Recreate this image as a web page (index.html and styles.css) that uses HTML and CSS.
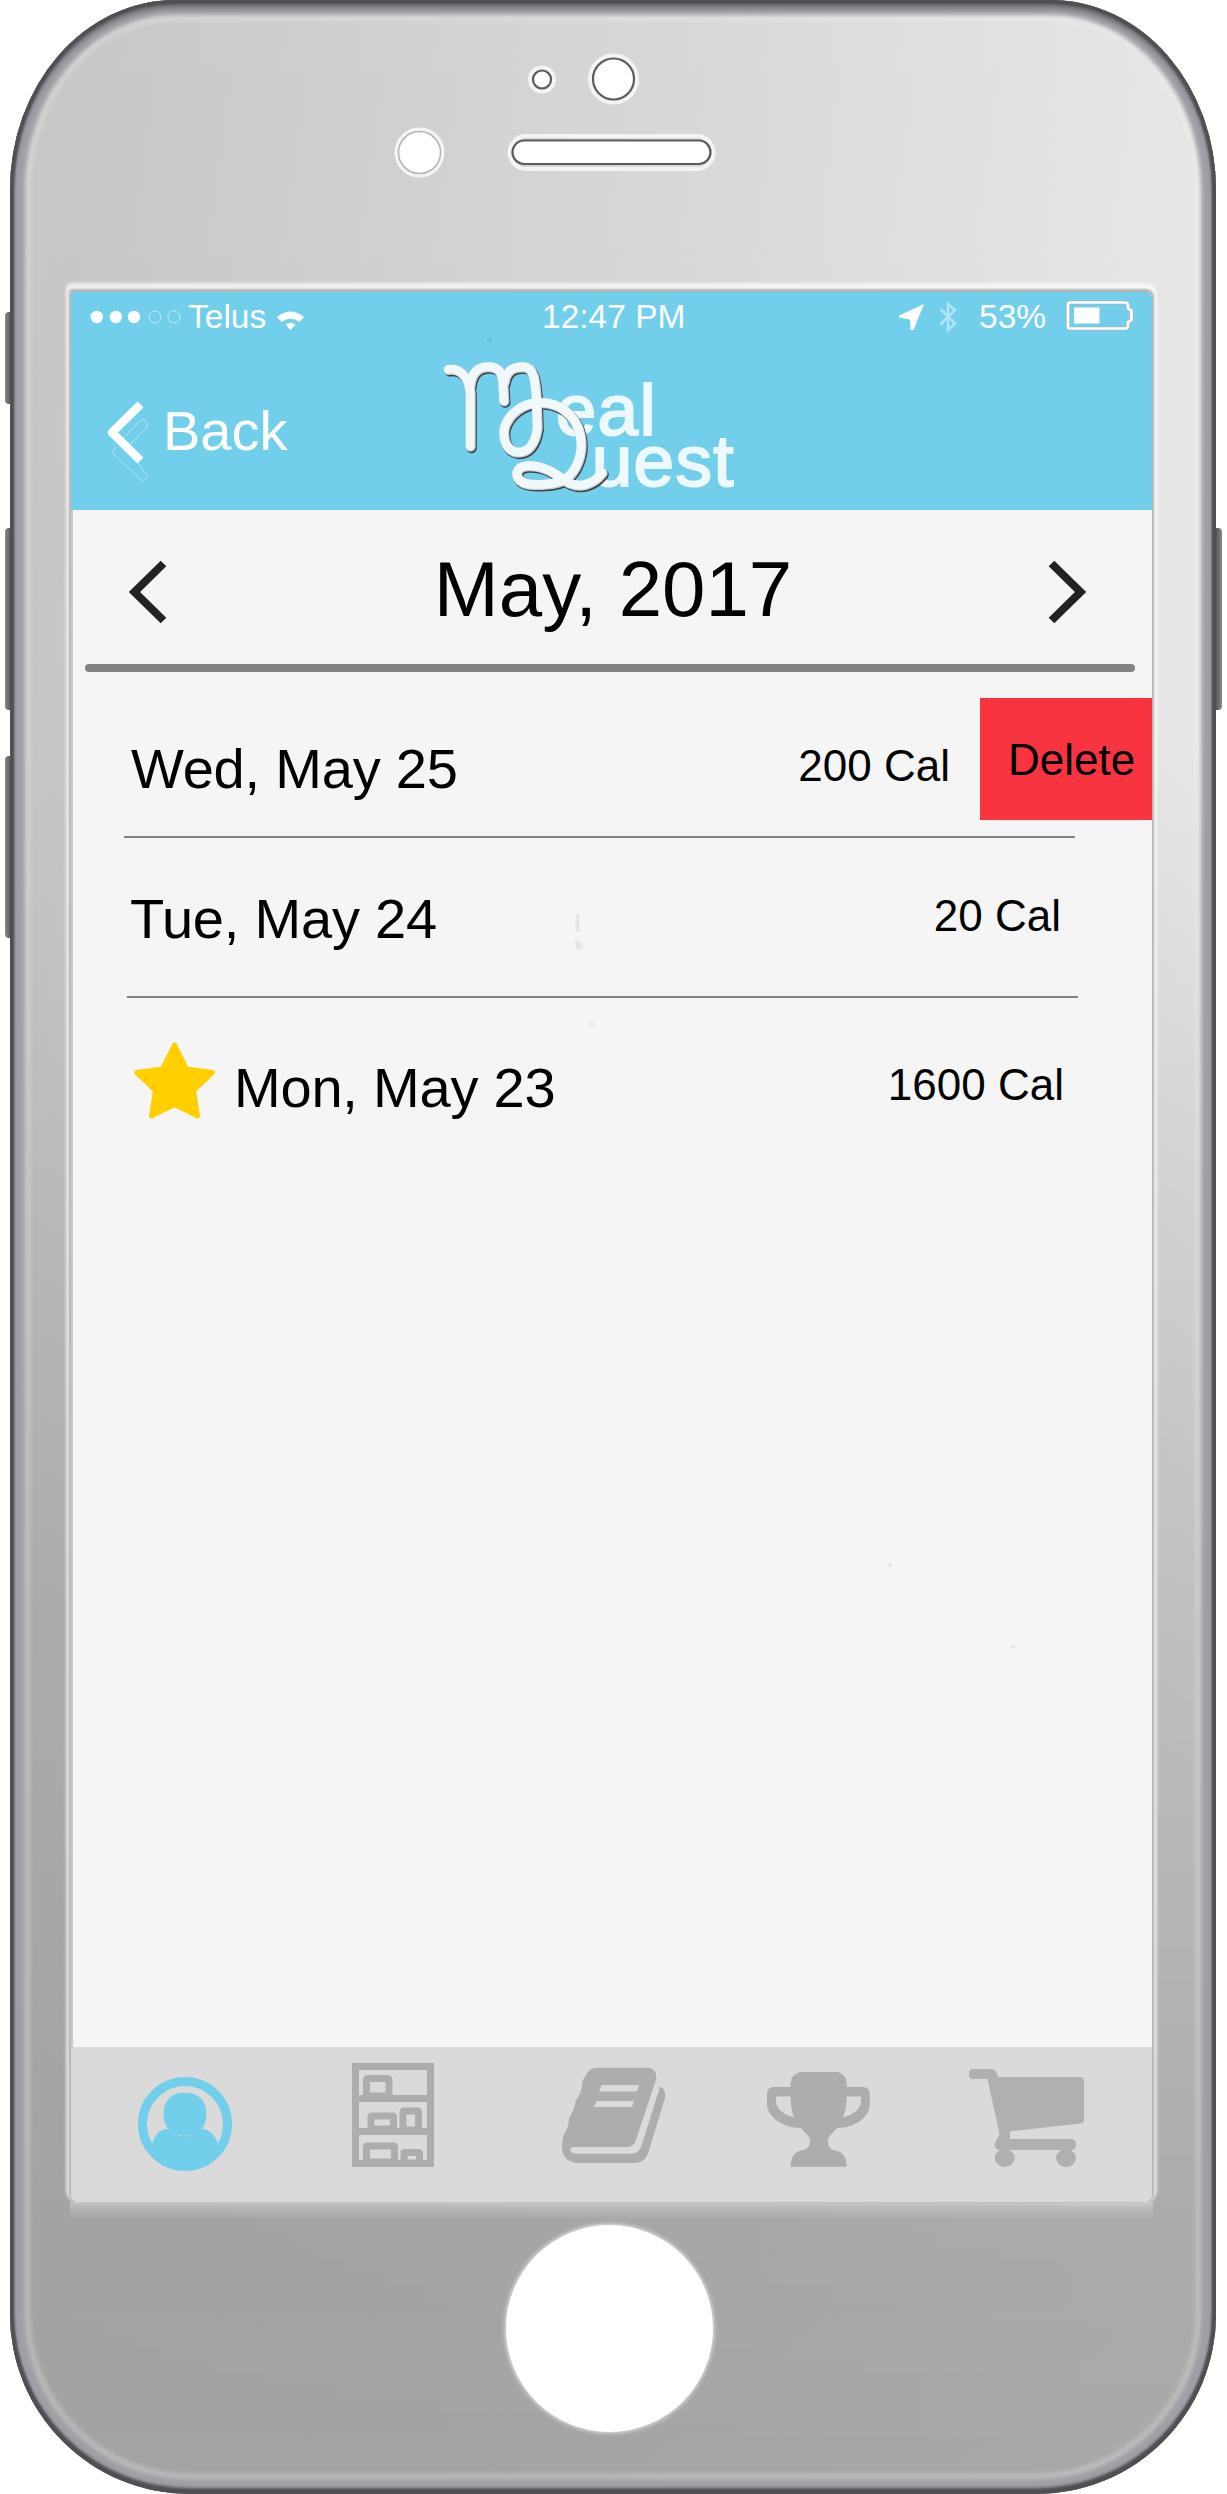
FILE: index.html
```html
<!DOCTYPE html>
<html lang="en">
<head>
<meta charset="utf-8">
<title>Meal Quest</title>
<link rel="stylesheet" href="styles.css">
</head>
<body>
<div class="device">
  <i class="side-button mute"></i>
  <i class="side-button volume-up"></i>
  <i class="side-button volume-down"></i>
  <i class="side-button power"></i>
  <div class="phone">
    <div class="bezel-top">
      <svg width="1206" height="292" viewBox="10 0 1206 292">
        <g fill="none" stroke="#f4f4f4" stroke-width="4">
          <circle cx="542" cy="79.500" r="12"/>
          <circle cx="613.500" cy="79" r="23.500"/>
          <circle cx="419.500" cy="152.500" r="23"/>
          <rect x="509.500" y="136" width="204" height="33" rx="16.500"/>
        </g>
        <g fill="#fff" stroke="#5c5c5c" stroke-width="2.200">
          <circle cx="542" cy="79.500" r="9"/>
          <circle cx="613.500" cy="79" r="20.500"/>
          <rect x="512.500" y="140.500" width="198" height="23.500" rx="11.700"/>
          <circle cx="419.500" cy="152.500" r="21" stroke="#b3b1bc" stroke-width="1.500"/>
        </g>
      </svg>
    </div>

    <main class="screen">
      <header class="header">
        <div class="status">
          <svg class="signal" width="110" height="49" viewBox="71 292 110 49">
            <g fill="#fff"><circle cx="96.800" cy="317" r="6.200"/><circle cx="115.900" cy="317" r="6.200"/><circle cx="134" cy="317" r="6.200"/></g>
            <g fill="none" stroke="#fff" stroke-opacity=".55" stroke-width="1"><circle cx="155" cy="317" r="6"/><circle cx="174" cy="317" r="6"/></g>
          </svg>
          <span class="carrier">Telus</span>
          <svg class="wifi" width="28" height="49" viewBox="276 292 28 49">
            <g fill="#fff"><path d="M277 317Q290.500 306 304 317L299.500 322Q290.500 315.500 281.500 322Z"/><path d="M285.500 324.500Q290.500 321 295.500 324.500L290.500 330Z"/></g>
          </svg>
          <span class="clock">12:47 PM</span>
          <svg class="radios" width="60" height="49" viewBox="899 292 60 49">
            <path fill="#fff" d="M925 304L914.500 330H911.500L911 319.500L900 317.500V315.500Z"/>
            <path fill="none" stroke="#fff" stroke-opacity=".45" stroke-width="2.600" d="M941.500 309L956 323.500L949 330V304L956 310L941.500 324.500"/>
          </svg>
          <span class="charge">53%</span>
          <svg class="battery" width="70" height="49" viewBox="1066 292 70 49">
            <path fill="none" stroke="#a9b4b8" stroke-width="4" d="M1071 302.500H1126Q1129 302.500 1129 305.500V308.500L1132.500 310.500V320L1129 322V325.500Q1129 328.500 1126 328.500H1071Q1069 328.500 1069 326.500V304.500Q1069 302.500 1071 302.500Z"/>
            <path fill="none" stroke="#fff" stroke-width="2.600" d="M1071 302.500H1126Q1129 302.500 1129 305.500V308.500L1132.500 310.500V320L1129 322V325.500Q1129 328.500 1126 328.500H1071Q1069 328.500 1069 326.500V304.500Q1069 302.500 1071 302.500Z"/>
            <path fill="#fff" d="M1075 307.500H1100.500V323.500H1075Z"/>
          </svg>
        </div>
        <nav class="navbar">
          <a class="back">
            <svg width="55" height="90" viewBox="100 395 55 90">
              <path fill="none" stroke="#fff" stroke-opacity=".45" stroke-width="1" d="M123 438L140 421Q145 418 147.500 423.500L147 427L125 450M116 447Q111 451 114 454.500L140 479Q145 483 147.500 476L137 462"/>
              <path fill="none" stroke="#fff" stroke-width="8.500" stroke-linejoin="round" d="M140.500 404.500L112 432.500L140.500 460.500"/>
            </svg>
            <span>Back</span>
          </a>
          <svg class="logo" width="340" height="150" viewBox="0 0 1020 450">
            <defs>
              <filter id="soft" x="-10%" y="-10%" width="120%" height="120%"><feGaussianBlur stdDeviation="2"/></filter>
              <g id="monogram">
                <path d="M86 60C118 54 147 78 152 130V290"/>
                <path d="M151 112C155 72 172 52 206 52C238 52 249 72 250 104L253 154"/>
                <path d="M254 98C260 62 280 52 312 52C343 54 346 92 350 140L353 236C346 288 322 308 295 308C262 306 248 272 254 236C266 192 310 159 362 159C436 160 485 216 485 288C483 340 458 378 428 394C396 406 332 410 308 398C282 384 286 350 326 349C376 348 410 374 440 396C480 420 524 402 548 370"/>
              </g>
            </defs>
            <g class="wordmark">
              <text x="407" y="255">eal</text>
              <text x="515" y="408">uest</text>
            </g>
            <g fill="none" stroke-linecap="round" stroke-linejoin="round">
              <use href="#monogram" transform="translate(3 4)" stroke="#3c4346" stroke-width="31" filter="url(#soft)"/>
              <use href="#monogram" stroke="#c9d3d6" stroke-width="30"/>
              <use href="#monogram" transform="translate(-1.500 -2)" stroke="#f0f8fa" stroke-width="26" filter="url(#soft)"/>
            </g>
          </svg>
        </nav>
      </header>

      <section class="content">
        <div class="month">
          <svg width="43" height="70" viewBox="125 557 43 70"><path fill="none" stroke="#222" stroke-width="8" d="M163.500 563.500L134.500 592L163.500 620.500"/></svg>
          <h1>May, 2017</h1>
          <svg width="44" height="70" viewBox="1046 557 44 70"><path fill="none" stroke="#222" stroke-width="8" d="M1051.500 563.500L1080.500 592L1051.500 620.500"/></svg>
        </div>
        <div class="rule"></div>
        <ul class="days">
          <li class="day day-open">
            <span class="date">Wed, May 25</span>
            <span class="calories">200 Cal</span>
            <button class="delete">Delete</button>
          </li>
          <li class="line"></li>
          <li class="day">
            <span class="date">Tue, May 24</span>
            <span class="calories">20 Cal</span>
          </li>
          <li class="line line-second"></li>
          <li class="day day-starred">
            <svg class="star" width="90" height="100" viewBox="130 1030 90 100"><path fill="#ffcf00" stroke="#ffcf00" stroke-width="5" stroke-linejoin="round" d="M174.500 1045L186.500 1069L212.500 1072.500L193.500 1090.500L197.500 1116L174.500 1104.500L151.500 1116L155.500 1090.500L136.500 1072.500L162.500 1069Z"/></svg>
            <span class="date">Mon, May 23</span>
            <span class="calories">1600 Cal</span>
          </li>
        </ul>
      </section>

      <footer class="tabs">
        <svg viewBox="71 2047 221 155">
          <circle cx="185" cy="2124" r="42.500" fill="none" stroke="#71cfeb" stroke-width="9"/>
          <path fill="#71cfeb" d="M152 2146C153 2137 159 2129 167 2129Q185 2144 202 2129C210 2129 217 2137 218 2146Q212 2167 185 2168Q158 2167 152 2146Z"/>
          <rect x="163.700" y="2092.700" width="42.500" height="43" rx="19" fill="#71cfeb"/>
        </svg>
        <svg viewBox="292 2047 206 155">
          <g fill="none" stroke="#adadad" stroke-width="7">
            <rect x="355.500" y="2066.500" width="75" height="97"/>
            <path d="M352 2098.500H434M352 2131.500H434"/>
            <path d="M366.500 2096V2080Q366.500 2078.500 368 2078.500H387.500Q389 2078.500 389 2080V2096H366.500"/>
            <path d="M371 2129V2117Q371 2116 372 2116H392.500Q393.500 2116 393.500 2117V2129H371"/>
            <path d="M403 2130V2112Q403 2111 404 2111H417.500Q418.500 2111 418.500 2112V2130Z"/>
            <path d="M366.500 2162V2147Q366.500 2146 367.500 2146H393.500Q394.500 2146 394.500 2147V2162Z"/>
            <path d="M404 2163V2153Q404 2152.500 405 2152.500H418.500Q419.500 2152.500 419.500 2153.500V2163Z"/>
          </g>
        </svg>
        <svg viewBox="498 2047 218 155">
          <path fill="#adadad" d="M596 2067.700H648Q657 2068.500 656.500 2079L636 2140Q634 2147 627 2147.300H573Q569 2147.500 571 2151Q572 2153.500 576 2153.500H632Q638 2153 641 2147L658 2089Q659 2085.500 662 2087.500Q666 2091 665 2098L648.500 2152Q645 2163 635 2163H576Q563 2161 562 2148Q562 2139 564 2134Q569 2127 569 2118Q575 2109 575.500 2101Q582 2092 582 2085Q582 2080 585 2077Q589 2067.700 596 2067.700Z"/>
          <path fill="#dadada" d="M601.500 2085H639L637 2091.500H599ZM596.500 2101H634L632 2107H593.500ZM573 2147.300H627Q634 2147 636 2140L657 2077L660 2087L641 2147Q638 2153 632 2153.500H576Q571 2153 570.500 2149.500Q571 2147.500 573 2147.300Z"/>
        </svg>
        <svg viewBox="716 2047 203 155">
          <path fill="#adadad" d="M800 2072H838Q846.700 2075 846.700 2084V2087H863Q869.800 2087 869.800 2094V2104C869.800 2117 855 2128 837 2128L830 2135.500C826 2140 828 2150 834 2150Q846.700 2152 846.700 2166.700H790.500Q790.500 2152 803 2150C810 2150 812 2140 808 2135.500L801 2128C783 2128 767 2117 767 2104V2094Q767 2087 774 2087H790.500V2084Q790.500 2075 800 2072Z"/>
          <path fill="#dadada" d="M776 2096.500H790.500Q790.500 2108 794 2117.500Q776 2112 776 2101ZM846.700 2096.500H861V2101Q861 2112 843 2117.500Q846.700 2108 846.700 2096.500Z"/>
        </svg>
        <svg viewBox="919 2047 233 155">
          <g fill="#b0b0b0">
            <path d="M972 2069H992Q996.500 2069 998 2077H1081Q1084 2078 1084 2081V2119Q1084 2123 1080 2123.500L1010 2131.300V2139H1072Q1076 2140 1076 2144.500Q1076 2149 1072 2150H999Q994.500 2149 994.600 2144L999.500 2134L987.500 2079H972Q969 2078.500 969 2074Q969 2069.500 972 2069Z"/>
            <ellipse cx="1004.700" cy="2158" rx="10" ry="9"/><ellipse cx="1066" cy="2158" rx="10" ry="9"/>
          </g>
        </svg>
      </footer>

      <svg class="specks" width="1081" height="1910" viewBox="71 292 1081 1910">
        <g fill="#e6e6e6">
          <rect x="575.500" y="914" width="4" height="18" rx="2"/>
          <path d="M575 939L583 944L582 949H576Z"/>
          <circle cx="591.500" cy="1024" r="2.500"/>
          <circle cx="890" cy="1565" r="2"/>
          <circle cx="1013" cy="1647" r="2"/>
        </g>
        <circle cx="489.500" cy="340" r="2.500" fill="#64c4e2"/>
      </svg>
    </main>

    <div class="bezel-bottom"><div class="home"></div></div>
  </div>
</div>
</body>
</html>
```
FILE: styles.css
```css
* { box-sizing: border-box; }

body {
  margin: 0;
  background: #fff;
  font-family: "Liberation Sans", Arial, sans-serif;
  color: #000;
}

svg { display: block; flex: none; }

.device {
  position: relative;
  height: 2494px;
  padding: 0 11px 0 10px;
  overflow: hidden;
}

/* hardware keys stick out from behind the case */
.side-button {
  position: absolute;
  width: 12px;
  background: linear-gradient(90deg, #8a8a8e, #4a4a4f 60%);
  border-radius: 4px;
}
.mute { left: 5px; top: 312px; height: 92px; }
.volume-up { left: 5px; top: 528px; height: 182px; }
.volume-down { left: 5px; top: 756px; height: 182px; }
.power { right: 5px; top: 528px; height: 182px; transform: scaleX(-1); }

.phone {
  position: relative;
  display: flex;
  flex-direction: column;
  width: 1206px;
  height: 2494px;
  border-radius: 165px 165px 180px 180px / 190px 190px 180px 180px;
  background:
    linear-gradient(90deg, rgba(255,255,255,0) 30%, rgba(255,255,255,.06) 100%),
    linear-gradient(180deg, #c9c9c9 0, #c5c5c5 750px, #bcbcbc 1050px, #a8a8a8 1600px, #a2a2a2 2250px, #a4a4a4 100%);
}
/* brighter right half of the glass */
.phone::before {
  content: "";
  position: absolute;
  inset: 0;
  border-radius: inherit;
  background: linear-gradient(100deg, rgba(255,255,255,0) 5%, rgba(255,255,255,.65) 90%);
  mask-image: linear-gradient(180deg, #000 0, #000 700px, rgba(0,0,0,.55) 1200px, rgba(0,0,0,.12) 2100px, transparent);
}
/* metal rim */
.phone::after {
  content: "";
  position: absolute;
  inset: 0;
  border-radius: inherit;
  pointer-events: none;
  box-shadow:
    inset 0 0 2px 4px #4f4f54,
    inset 0 6px 5px 2px #6d6d72,
    inset 0 -3px 3px 3px #55555a,
    inset 0 0 4px 15px #a09fa6,
    inset 0 0 5px 20px rgba(255,255,255,.3);
}

.bezel-top { position: relative; height: 292px; }

.screen {
  position: relative;
  z-index: 1;
  display: flex;
  flex-direction: column;
  width: 1081px;
  height: 1910px;
  margin-left: 61px;
  border-radius: 2px 6px 8px 8px;
  background: #f5f5f5;
  box-shadow: 0 -1px 2px 2px #b4b4b4, 0 -4px 3px 5px rgba(255,255,255,.7);
}

.header { height: 218px; background: #71cfeb; border-radius: 2px 6px 0 0; color: #fff; }

.status {
  display: flex;
  height: 49px;
  font-size: 33.500px;
  line-height: 49px;
  white-space: nowrap;
}
.carrier { width: 87px; margin-left: 7px; }
.wifi { margin-left: 1px; }
.clock { width: 355px; margin-left: 238px; }
.radios { margin-left: 1px; }
.charge { width: 86px; margin-left: 21px; }

.navbar { display: flex; height: 169px; }
.back {
  display: flex;
  width: 349px;
  padding: 54px 0 0 29px;
  font-size: 56px;
  line-height: 71px;
}
.back span { margin-left: 8px; }
.logo { margin-top: 9px; overflow: visible; }
.wordmark {
  font-size: 219px;
  letter-spacing: 4px;
  fill: #edf9fc;
  stroke: #edf9fc;
  stroke-width: 6px;
}

.content {
  flex: 1;
  border-left: 2px solid #cbcbcb;
}
.month {
  display: flex;
  align-items: center;
  justify-content: space-between;
  height: 154px;
  padding: 4px 62px 0 52px;
}
.month svg { margin-top: 6px; }
h1 {
  margin: 0 0 0 12px;
  font-size: 78px;
  font-weight: 400;
  line-height: 90px;
}
.rule {
  height: 8px;
  margin: 0 17px 0 12px;
  border-radius: 4px;
  background: #828282;
}

.days { margin: 0; padding: 0; list-style: none; }
.day {
  display: flex;
  height: 158px;
  padding: 10px 91px 0 57px;
  font-size: 44px;
  line-height: 136px;
}
.day-open { height: 164px; padding: 26px 0 0 58px; }
.day-starred { padding: 19px 88px 0 57px; }
.date { flex: 1; font-size: 56px; line-height: 141px; letter-spacing: -.2px; }
.star { margin: 13px 14px 0 0; }
.delete {
  width: 172px;
  height: 122px;
  margin-left: 30px;
  padding: 0 0 0 28px;
  border: 0;
  background: #f73440;
  font: inherit;
  line-height: 124px;
  text-align: left;
  color: #000;
}
.line { width: 951px; height: 2px; margin-left: 51px; background: #828282; }
.line-second { margin-left: 54px; }

.tabs {
  display: grid;
  grid-template-columns: 221px 206px 218px 203px 233px;
  height: 155px;
  border-radius: 0 0 8px 8px;
  background: #dadada;
}

/* faint marks over the empty part of the list */
.specks { position: absolute; left: 0; top: 0; pointer-events: none; }

.bezel-bottom {
  position: relative;
  flex: 1;
  padding: 23px 0 0 496px;
  background: linear-gradient(180deg, rgba(255,255,255,.3) 0, rgba(255,255,255,0) 18px) 60px 0 / 1083px 100% no-repeat;
}
.home {
  width: 207px;
  height: 207px;
  border-radius: 50%;
  background: #fff;
  box-shadow: 0 0 4px 1px rgba(255,255,255,.7);
}
```
